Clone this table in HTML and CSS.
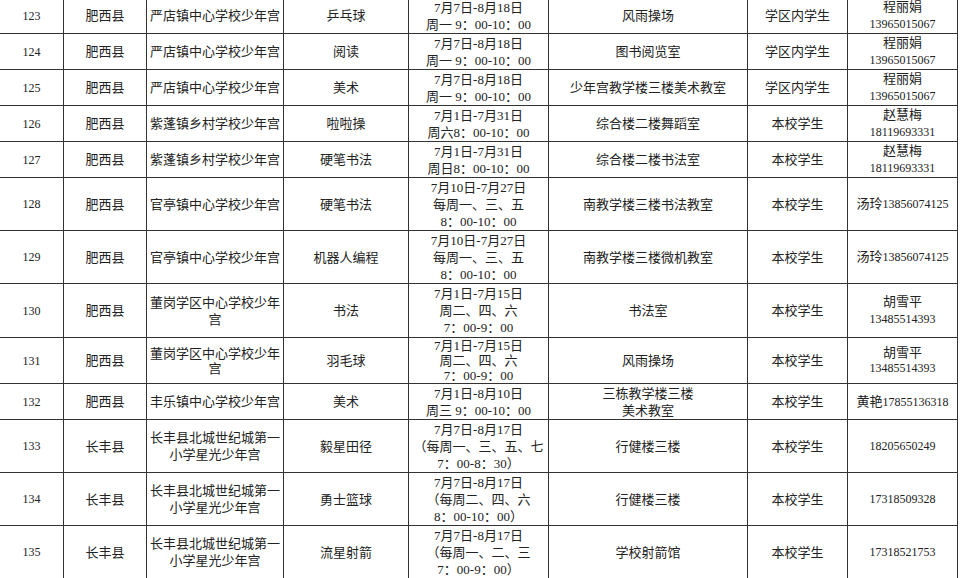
FILE: index.html
```html
<!DOCTYPE html>
<html lang="zh-CN">
<head>
<meta charset="utf-8">
<title>少年宫活动安排</title>
<link rel="stylesheet" href="styles.css">
</head>
<body>
<table class="sched">
<colgroup>
<col class="c1"><col class="c2"><col class="c3"><col class="c4"><col class="c5"><col class="c6"><col class="c7"><col class="c8">
</colgroup>
<tbody>
<tr class="h35"><td><span class="n">123</span></td><td>肥西县</td><td>严店镇中心学校少年宫</td><td>乒乓球</td><td>7月7日-8月18日<br>周一 9：00-10：00</td><td>风雨操场</td><td>学区内学生</td><td>程丽娟<br><span class="n">13965015067</span></td></tr>
<tr class="h36"><td><span class="n">124</span></td><td>肥西县</td><td>严店镇中心学校少年宫</td><td>阅读</td><td>7月7日-8月18日<br>周一 9：00-10：00</td><td>图书阅览室</td><td>学区内学生</td><td>程丽娟<br><span class="n">13965015067</span></td></tr>
<tr class="h35"><td><span class="n">125</span></td><td>肥西县</td><td>严店镇中心学校少年宫</td><td>美术</td><td>7月7日-8月18日<br>周一 9：00-10：00</td><td>少年宫教学楼三楼美术教室</td><td>学区内学生</td><td>程丽娟<br><span class="n">13965015067</span></td></tr>
<tr class="h36"><td><span class="n">126</span></td><td>肥西县</td><td>紫蓬镇乡村学校少年宫</td><td>啦啦操</td><td>7月1日-7月31日<br>周六8：00-10：00</td><td>综合楼二楼舞蹈室</td><td>本校学生</td><td>赵慧梅<br><span class="n">18119693331</span></td></tr>
<tr class="h36"><td><span class="n">127</span></td><td>肥西县</td><td>紫蓬镇乡村学校少年宫</td><td>硬笔书法</td><td>7月1日-7月31日<br>周日8：00-10：00</td><td>综合楼二楼书法室</td><td>本校学生</td><td>赵慧梅<br><span class="n">18119693331</span></td></tr>
<tr class="h53"><td><span class="n">128</span></td><td>肥西县</td><td>官亭镇中心学校少年宫</td><td>硬笔书法</td><td>7月10日-7月27日<br>每周一、三、五<br>8：00-10：00</td><td>南教学楼三楼书法教室</td><td>本校学生</td><td>汤玲<span class="n">13856074125</span></td></tr>
<tr class="h53"><td><span class="n">129</span></td><td>肥西县</td><td>官亭镇中心学校少年宫</td><td>机器人编程</td><td>7月10日-7月27日<br>每周一、三、五<br>8：00-10：00</td><td>南教学楼三楼微机教室</td><td>本校学生</td><td>汤玲<span class="n">13856074125</span></td></tr>
<tr class="h54"><td><span class="n">130</span></td><td>肥西县</td><td>董岗学区中心学校少年<br>宫</td><td>书法</td><td>7月1日-7月15日<br>周二、四、六<br>7：00-9：00</td><td>书法室</td><td>本校学生</td><td>胡雪平<br><span class="n">13485514393</span></td></tr>
<tr class="h46"><td><span class="n">131</span></td><td>肥西县</td><td>董岗学区中心学校少年<br>宫</td><td>羽毛球</td><td>7月1日-7月15日<br>周二、四、六<br>7：00-9：00</td><td>风雨操场</td><td>本校学生</td><td>胡雪平<br><span class="n">13485514393</span></td></tr>
<tr class="h36"><td><span class="n">132</span></td><td>肥西县</td><td>丰乐镇中心学校少年宫</td><td>美术</td><td>7月1日-8月10日<br>周三 9：00-10：00</td><td>三栋教学楼三楼<br>美术教室</td><td>本校学生</td><td>黄艳<span class="n">17855136318</span></td></tr>
<tr class="h53"><td><span class="n">133</span></td><td>长丰县</td><td>长丰县北城世纪城第一<br>小学星光少年宫</td><td>毅星田径</td><td>7月7日-8月17日<br>（每周一、三、五、七<br>7：00-8：30）</td><td>行健楼三楼</td><td>本校学生</td><td><span class="n">18205650249</span></td></tr>
<tr class="h53"><td><span class="n">134</span></td><td>长丰县</td><td>长丰县北城世纪城第一<br>小学星光少年宫</td><td>勇士篮球</td><td>7月7日-8月17日<br>（每周二、四、六<br>8：00-10：00）</td><td>行健楼三楼</td><td>本校学生</td><td><span class="n">17318509328</span></td></tr>
<tr class="h53"><td><span class="n">135</span></td><td>长丰县</td><td>长丰县北城世纪城第一<br>小学星光少年宫</td><td>流星射箭</td><td>7月7日-8月17日<br>（每周一、二、三<br>7：00-9：00）</td><td>学校射箭馆</td><td>本校学生</td><td><span class="n">17318521753</span></td></tr>
</tbody>
</table>
</body>
</html>
```
FILE: styles.css
```css
html, body {
  margin: 0;
  padding: 0;
  background: #ffffff;
}

.sched {
  border-collapse: collapse;
  table-layout: fixed;
  width: 958px;
  margin: -3px 0 0 -1px;
  font-family: "Liberation Serif", "Noto Sans CJK SC", serif;
  font-size: 13px;
  line-height: 17px;
  color: #222222;
}

.c1 { width: 64px; }
.c2 { width: 83px; }
.c3 { width: 137px; }
.c4 { width: 125px; }
.c5 { width: 140px; }
.c6 { width: 199px; }
.c7 { width: 100px; }
.c8 { width: 110px; }

.sched td {
  border: 1px solid #333333;
  padding: 0 1px;
  text-align: center;
  vertical-align: middle;
  white-space: nowrap;
  overflow: hidden;
}

.n {
  font-size: 12px;
}

.h35 td { height: 34px; }
.h36 td { height: 35px; }
.h53 td { height: 52px; }
.h54 td { height: 53px; }
.h46 td { height: 45px; line-height: 15px; }
```
